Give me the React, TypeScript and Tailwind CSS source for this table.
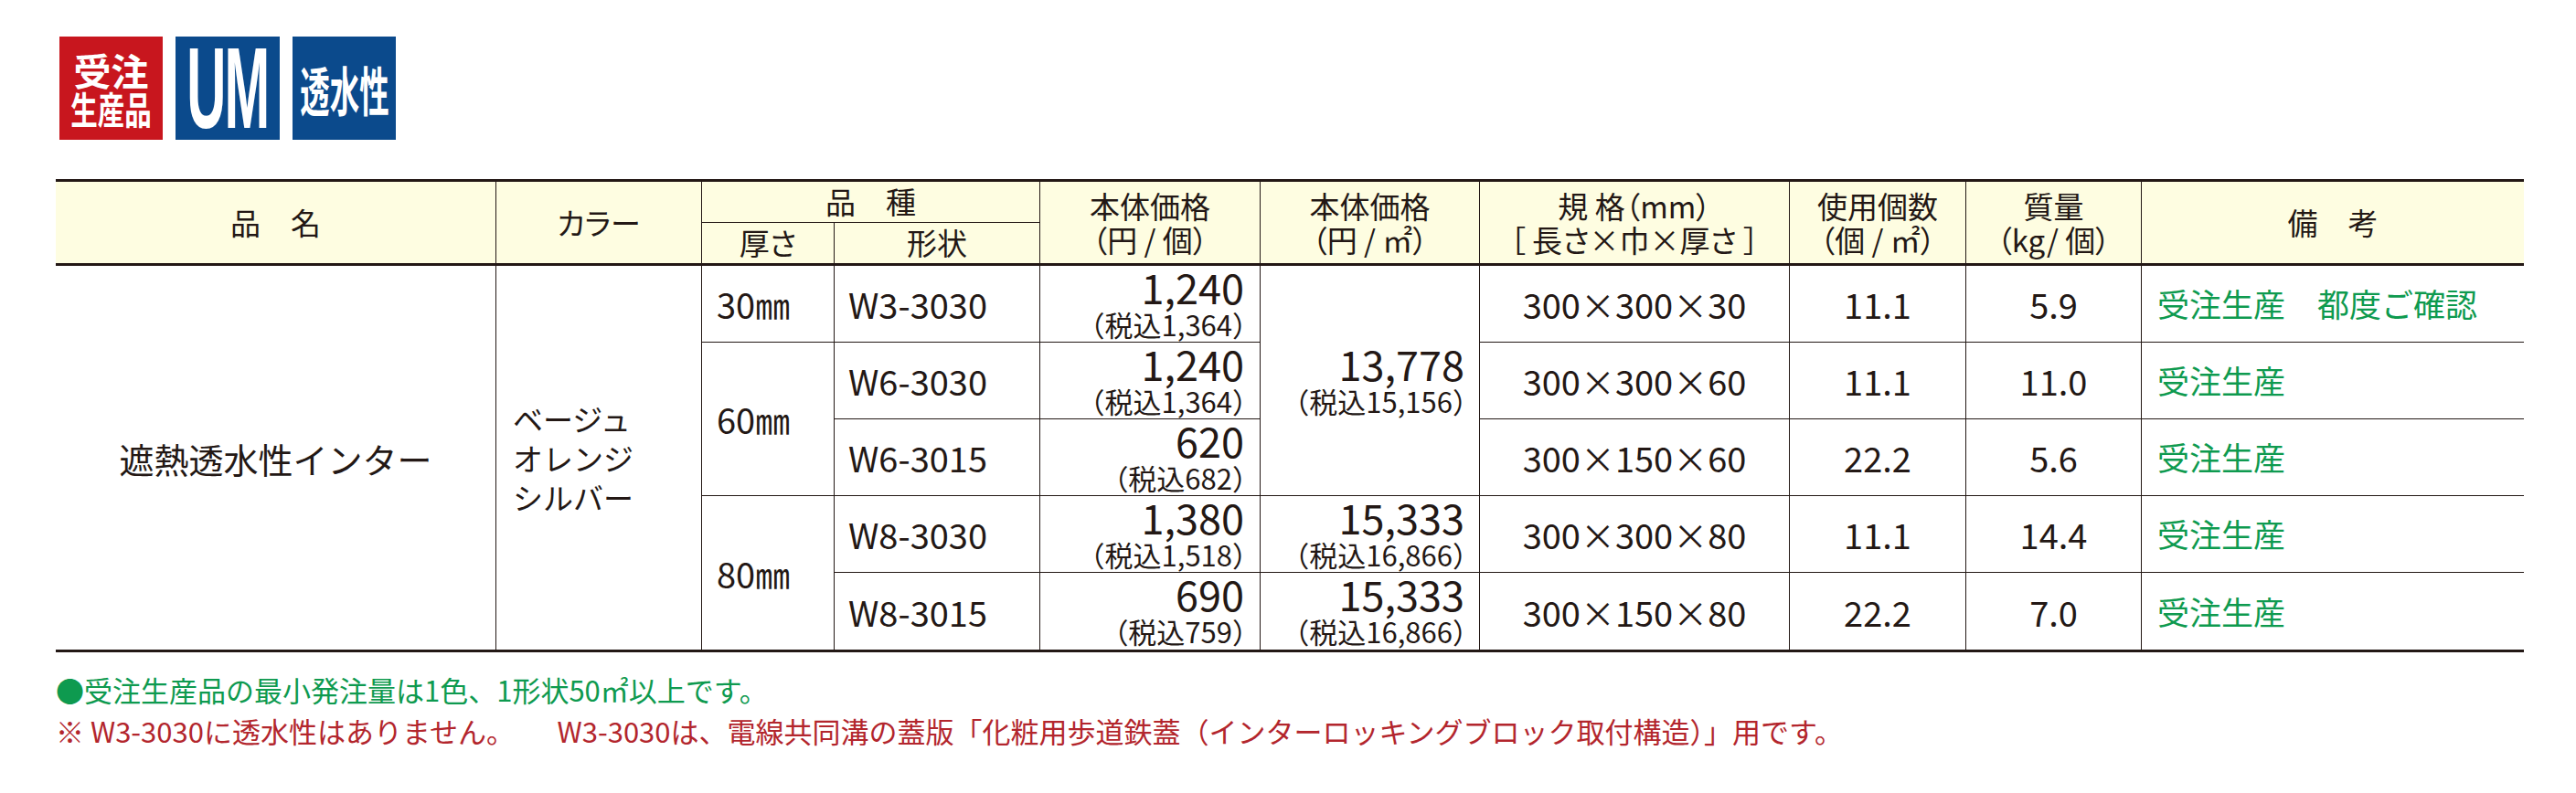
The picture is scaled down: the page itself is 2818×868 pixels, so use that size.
import React from "react";

const Badges = () => (
  <div className="flex gap-[14px] pl-[65px] pt-[40px]">
    <div className="w-[113px] h-[113px] bg-[#c8161e] flex flex-col items-center justify-center text-white font-bold font-['Noto_Sans_CJK_JP',sans-serif]">
      <div className="text-[41px] leading-[42px]">受注</div>
      <div className="text-[41px] leading-[42px] scale-x-[0.72] whitespace-nowrap">生産品</div>
    </div>
    <div className="w-[114px] h-[113px] bg-[#0b4a8c] flex items-center justify-center">
      <div className="w-[100px] flex justify-center">
        <div className="text-white font-bold font-['Liberation_Sans',sans-serif] text-[127px] leading-[113px] scale-x-[0.47] tracking-[-4px] whitespace-nowrap">
          UM
        </div>
      </div>
    </div>
    <div className="w-[113px] h-[113px] bg-[#0b4a8c] flex items-center justify-center">
      <div className="text-white font-bold font-['Noto_Sans_CJK_JP',sans-serif] text-[58px] leading-[60px] scale-x-[0.56] whitespace-nowrap">
        透水性
      </div>
    </div>
  </div>
);

const Head = () => (
  <div className="grid grid-cols-[481px_224px_144px_224px_240px_239px_338px_192px_191px_418px] grid-rows-[44px_44px] gap-px bg-[#231815] text-[33px] text-[#231815] [font-feature-settings:'palt']">
    <div className="col-start-1 row-start-1 row-span-2 bg-[#fefde1] flex items-center justify-center">品　名</div>
    <div className="col-start-2 row-start-1 row-span-2 bg-[#fefde1] flex items-center justify-center">カラー</div>
    <div className="col-start-3 col-span-2 row-start-1 bg-[#fefde1] flex items-center justify-center">品　種</div>
    <div className="col-start-3 row-start-2 bg-[#fefde1] flex items-center justify-center">厚さ</div>
    <div className="col-start-4 row-start-2 bg-[#fefde1] flex items-center justify-center">形状</div>
    <div className="col-start-5 row-start-1 row-span-2 bg-[#fefde1] flex flex-col items-center justify-center leading-[37px]">
      <div>本体価格</div>
      <div>（円 / 個）</div>
    </div>
    <div className="col-start-6 row-start-1 row-span-2 bg-[#fefde1] flex flex-col items-center justify-center leading-[37px]">
      <div>本体価格</div>
      <div>（円 / ㎡）</div>
    </div>
    <div className="col-start-7 row-start-1 row-span-2 bg-[#fefde1] flex flex-col items-center justify-center leading-[37px]">
      <div>規 格（mm）</div>
      <div>［ 長さ×巾×厚さ ］</div>
    </div>
    <div className="col-start-8 row-start-1 row-span-2 bg-[#fefde1] flex flex-col items-center justify-center leading-[37px]">
      <div>使用個数</div>
      <div>（個 / ㎡）</div>
    </div>
    <div className="col-start-9 row-start-1 row-span-2 bg-[#fefde1] flex flex-col items-center justify-center leading-[37px]">
      <div>質量</div>
      <div>（kg/ 個）</div>
    </div>
    <div className="col-start-10 row-start-1 row-span-2 bg-[#fefde1] flex items-center justify-center">備　考</div>
  </div>
);

const Price = ({ big, small }: { big: string; small: string }) => (
  <>
    <div className="text-[45px] leading-[44px]">{big}</div>
    <div className="text-[31px] leading-[38px] mr-[-18px]">{small}</div>
  </>
);

const Body = () => (
  <div className="grid grid-cols-[481px_224px_144px_224px_240px_239px_338px_192px_191px_418px] grid-rows-[83px_83px_83px_83px_84px] gap-px bg-[#231815] text-[#231815]">
    <div className="col-start-1 row-start-1 row-span-5 bg-white flex items-center justify-center text-[38px]">遮熱透水性インター</div>
    <div className="col-start-2 row-start-1 row-span-5 bg-white flex flex-col justify-center pl-[18px] text-[33px] leading-[43px]">
      <div>ベージュ</div>
      <div>オレンジ</div>
      <div>シルバー</div>
    </div>

    <div className="col-start-3 row-start-1 bg-white flex items-center pl-[16px] text-[38px]">30㎜</div>
    <div className="col-start-3 row-start-2 row-span-2 bg-white flex items-center pl-[16px] text-[38px]">60㎜</div>
    <div className="col-start-3 row-start-4 row-span-2 bg-white flex items-center pl-[16px] text-[38px]">80㎜</div>

    <div className="col-start-4 row-start-1 bg-white flex items-center pl-[15px] text-[38px]">W3-3030</div>
    <div className="col-start-4 row-start-2 bg-white flex items-center pl-[15px] text-[38px]">W6-3030</div>
    <div className="col-start-4 row-start-3 bg-white flex items-center pl-[15px] text-[38px]">W6-3015</div>
    <div className="col-start-4 row-start-4 bg-white flex items-center pl-[15px] text-[38px]">W8-3030</div>
    <div className="col-start-4 row-start-5 bg-white flex items-center pl-[15px] text-[38px]">W8-3015</div>

    <div className="col-start-5 row-start-1 bg-white flex flex-col items-end justify-center pr-[17px]">
      <Price big="1,240" small="（税込1,364）" />
    </div>
    <div className="col-start-5 row-start-2 bg-white flex flex-col items-end justify-center pr-[17px]">
      <Price big="1,240" small="（税込1,364）" />
    </div>
    <div className="col-start-5 row-start-3 bg-white flex flex-col items-end justify-center pr-[17px]">
      <Price big="620" small="（税込682）" />
    </div>
    <div className="col-start-5 row-start-4 bg-white flex flex-col items-end justify-center pr-[17px]">
      <Price big="1,380" small="（税込1,518）" />
    </div>
    <div className="col-start-5 row-start-5 bg-white flex flex-col items-end justify-center pr-[17px]">
      <Price big="690" small="（税込759）" />
    </div>

    <div className="col-start-6 row-start-1 row-span-3 bg-white flex flex-col items-end justify-center pr-[16px]">
      <Price big="13,778" small="（税込15,156）" />
    </div>
    <div className="col-start-6 row-start-4 bg-white flex flex-col items-end justify-center pr-[16px]">
      <Price big="15,333" small="（税込16,866）" />
    </div>
    <div className="col-start-6 row-start-5 bg-white flex flex-col items-end justify-center pr-[16px]">
      <Price big="15,333" small="（税込16,866）" />
    </div>

    <div className="col-start-7 row-start-1 bg-white flex items-center justify-center text-[38px]">300×300×30</div>
    <div className="col-start-7 row-start-2 bg-white flex items-center justify-center text-[38px]">300×300×60</div>
    <div className="col-start-7 row-start-3 bg-white flex items-center justify-center text-[38px]">300×150×60</div>
    <div className="col-start-7 row-start-4 bg-white flex items-center justify-center text-[38px]">300×300×80</div>
    <div className="col-start-7 row-start-5 bg-white flex items-center justify-center text-[38px]">300×150×80</div>

    <div className="col-start-8 row-start-1 bg-white flex items-center justify-center text-[38px]">11.1</div>
    <div className="col-start-8 row-start-2 bg-white flex items-center justify-center text-[38px]">11.1</div>
    <div className="col-start-8 row-start-3 bg-white flex items-center justify-center text-[38px]">22.2</div>
    <div className="col-start-8 row-start-4 bg-white flex items-center justify-center text-[38px]">11.1</div>
    <div className="col-start-8 row-start-5 bg-white flex items-center justify-center text-[38px]">22.2</div>

    <div className="col-start-9 row-start-1 bg-white flex items-center justify-center text-[38px]">5.9</div>
    <div className="col-start-9 row-start-2 bg-white flex items-center justify-center text-[38px]">11.0</div>
    <div className="col-start-9 row-start-3 bg-white flex items-center justify-center text-[38px]">5.6</div>
    <div className="col-start-9 row-start-4 bg-white flex items-center justify-center text-[38px]">14.4</div>
    <div className="col-start-9 row-start-5 bg-white flex items-center justify-center text-[38px]">7.0</div>

    <div className="col-start-10 row-start-1 bg-white flex items-center pl-[17px] text-[35px] text-[#0e9a4f]">受注生産　都度ご確認</div>
    <div className="col-start-10 row-start-2 bg-white flex items-center pl-[17px] text-[35px] text-[#0e9a4f]">受注生産</div>
    <div className="col-start-10 row-start-3 bg-white flex items-center pl-[17px] text-[35px] text-[#0e9a4f]">受注生産</div>
    <div className="col-start-10 row-start-4 bg-white flex items-center pl-[17px] text-[35px] text-[#0e9a4f]">受注生産</div>
    <div className="col-start-10 row-start-5 bg-white flex items-center pl-[17px] text-[35px] text-[#0e9a4f]">受注生産</div>
  </div>
);

export default function App() {
  return (
    <div className="w-[2818px] h-[868px] bg-white overflow-hidden font-['Noto_Sans_CJK_JP',sans-serif]">
      <Badges />
      <div className="ml-[61px] mt-[43px] w-[2700px]">
        <div className="h-[3px] bg-[#231815]" />
        <Head />
        <div className="h-[3px] bg-[#231815]" />
        <Body />
        <div className="h-[3px] bg-[#231815]" />
      </div>
      <div className="pl-[61px] pt-[18px] text-[31px] leading-[45px] whitespace-nowrap">
        <div className="text-[#0e9a4f]">●受注生産品の最小発注量は1色、1形状50㎡以上です。</div>
        <div className="text-[#b3262d]">※ W3-3030に透水性はありません。　　W3-3030は、電線共同溝の蓋版「化粧用歩道鉄蓋（インターロッキングブロック取付構造）」用です。</div>
      </div>
    </div>
  );
}
